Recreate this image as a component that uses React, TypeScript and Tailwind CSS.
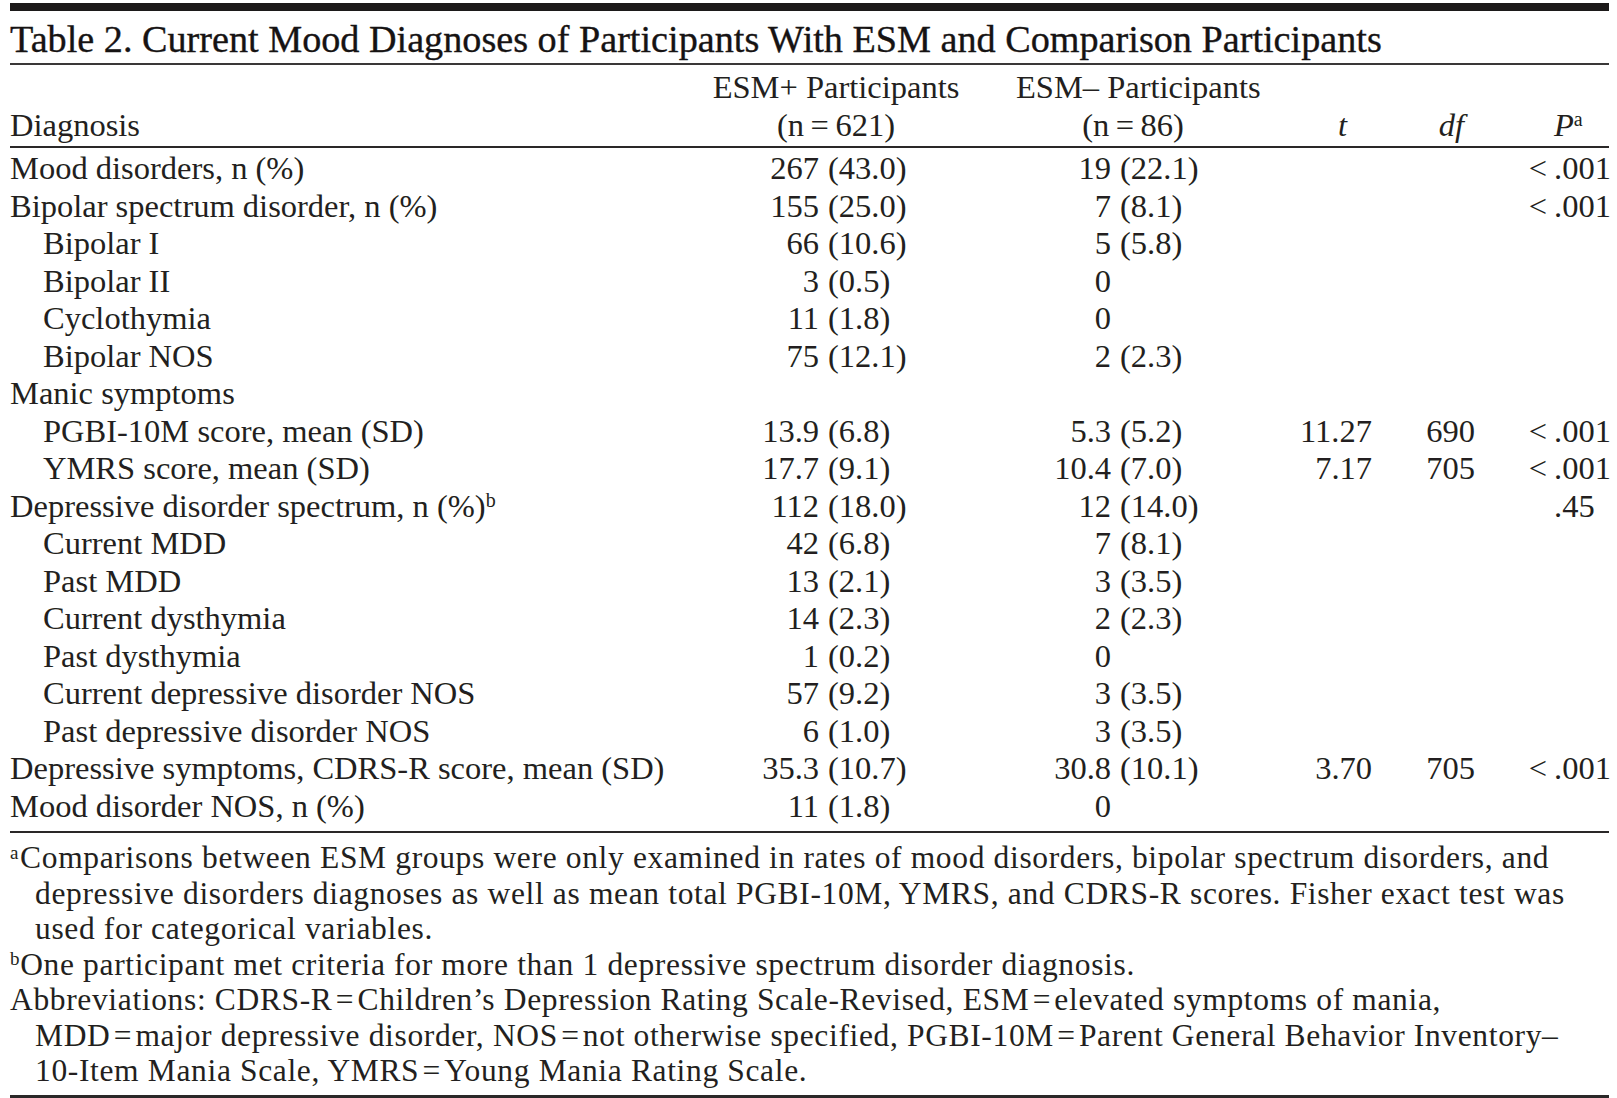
import React from "react";

type Row = {
  label: React.ReactNode;
  indent?: boolean;
  plus?: [string, string];
  minus?: [string, string];
  t?: string;
  df?: string;
  p?: [string, string];
};

const lt: [string, string] = ["<", ".001"];

const rows: Row[] = [
  { label: "Mood disorders, n (%)", plus: ["267", "(43.0)"], minus: ["19", "(22.1)"], p: lt },
  { label: "Bipolar spectrum disorder, n (%)", plus: ["155", "(25.0)"], minus: ["7", "(8.1)"], p: lt },
  { label: "Bipolar I", indent: true, plus: ["66", "(10.6)"], minus: ["5", "(5.8)"] },
  { label: "Bipolar II", indent: true, plus: ["3", "(0.5)"], minus: ["0", ""] },
  { label: "Cyclothymia", indent: true, plus: ["11", "(1.8)"], minus: ["0", ""] },
  { label: "Bipolar NOS", indent: true, plus: ["75", "(12.1)"], minus: ["2", "(2.3)"] },
  { label: "Manic symptoms" },
  { label: "PGBI-10M score, mean (SD)", indent: true, plus: ["13.9", "(6.8)"], minus: ["5.3", "(5.2)"], t: "11.27", df: "690", p: lt },
  { label: "YMRS score, mean (SD)", indent: true, plus: ["17.7", "(9.1)"], minus: ["10.4", "(7.0)"], t: "7.17", df: "705", p: lt },
  {
    label: (
      <>
        Depressive disorder spectrum, n (%)<sup className="text-[20px]">b</sup>
      </>
    ),
    plus: ["112", "(18.0)"],
    minus: ["12", "(14.0)"],
    p: ["", ".45"],
  },
  { label: "Current MDD", indent: true, plus: ["42", "(6.8)"], minus: ["7", "(8.1)"] },
  { label: "Past MDD", indent: true, plus: ["13", "(2.1)"], minus: ["3", "(3.5)"] },
  { label: "Current dysthymia", indent: true, plus: ["14", "(2.3)"], minus: ["2", "(2.3)"] },
  { label: "Past dysthymia", indent: true, plus: ["1", "(0.2)"], minus: ["0", ""] },
  { label: "Current depressive disorder NOS", indent: true, plus: ["57", "(9.2)"], minus: ["3", "(3.5)"] },
  { label: "Past depressive disorder NOS", indent: true, plus: ["6", "(1.0)"], minus: ["3", "(3.5)"] },
  { label: "Depressive symptoms, CDRS-R score, mean (SD)", plus: ["35.3", "(10.7)"], minus: ["30.8", "(10.1)"], t: "3.70", df: "705", p: lt },
  { label: "Mood disorder NOS, n (%)", plus: ["11", "(1.8)"], minus: ["0", ""] },
];

const grid =
  "grid grid-cols-[690px_119px_171px_121px_139px_122px_103px_72px_62px] whitespace-nowrap";

function DataRow({ row }: { row: Row }) {
  return (
    <div className={`${grid} h-[37.5px] leading-[37.5px]`}>
      <div className={row.indent ? "pl-[33px]" : ""}>{row.label}</div>
      <div className="text-right">{row.plus?.[0]}</div>
      <div className="pl-[9px]">{row.plus?.[1]}</div>
      <div className="text-right">{row.minus?.[0]}</div>
      <div className="pl-[9px]">{row.minus?.[1]}</div>
      <div className="text-right">{row.t}</div>
      <div className="text-right">{row.df}</div>
      <div className="text-right">{row.p?.[0]}</div>
      <div className="pl-[7px]">{row.p?.[1]}</div>
    </div>
  );
}

const eq = "\u2009=\u2009";
const feq = "\u200a=\u200a";

export default function App() {
  return (
    <div className="min-h-screen bg-white text-[#231f20] font-['Liberation_Serif',serif]">
      <div className="ml-[10px] w-[1599px] pt-[3px]">
        <div className="h-[8px] bg-[#1c1a1a]" />

        <h1 className="mt-[9px] h-[43px] whitespace-nowrap text-[38.2px] leading-[39px] font-normal text-[#161313] [-webkit-text-stroke:0.35px_#161313]">
          Table 2. Current Mood Diagnoses of Participants With ESM and Comparison Participants
        </h1>
        <div className="h-[2px] bg-[#3a3838]" />

        <div className="pt-[4px] text-[32.5px]">
          {/* header */}
          <div className={`${grid} h-[37.5px] leading-[37.5px]`}>
            <div />
            <div className="col-span-2 pr-[18px] text-center">ESM+ Participants</div>
            <div className="col-span-2 pl-[26px] text-center">ESM– Participants</div>
          </div>
          <div className={`${grid} h-[37.5px] leading-[37.5px]`}>
            <div>Diagnosis</div>
            <div className="col-span-2 pr-[18px] text-center">(n{eq}621)</div>
            <div className="col-span-2 pl-[26px] text-center">(n{eq}86)</div>
            <div className="pr-[25px] text-right italic">t</div>
            <div className="pr-[11px] text-right italic">df</div>
            <div />
            <div className="pl-[7px]">
              <span className="italic">P</span>
              <sup className="text-[20px]">a</sup>
            </div>
          </div>
        </div>
        <div className="mt-[2px] h-[2px] bg-[#2a2828]" />

        <div className="pt-[2px] text-[32.5px]">
          {rows.map((r, i) => (
            <DataRow key={i} row={r} />
          ))}
        </div>
        <div className="mt-[6px] h-[2px] bg-[#2a2828]" />

        <div className="pt-[7px] text-[31.5px] leading-[35.5px] tracking-[0.65px] whitespace-nowrap">
          <div>
            <sup className="text-[19px]">a</sup>
            <span className="pl-[1px]">
              Comparisons between ESM groups were only examined in rates of mood disorders, bipolar spectrum disorders, and
            </span>
          </div>
          <div className="pl-[25px]">
            depressive disorders diagnoses as well as mean total PGBI-10M, YMRS, and CDRS-R scores. Fisher exact test was
          </div>
          <div className="pl-[25px]">used for categorical variables.</div>
          <div>
            <sup className="text-[19px]">b</sup>
            One participant met criteria for more than 1 depressive spectrum disorder diagnosis.
          </div>
          <div>
            Abbreviations: CDRS-R{feq}Children’s Depression Rating Scale-Revised, ESM{feq}elevated symptoms of mania,
          </div>
          <div className="pl-[25px]">
            MDD{feq}major depressive disorder, NOS{feq}not otherwise specified, PGBI-10M{feq}Parent General Behavior Inventory–
          </div>
          <div className="pl-[25px]">10-Item Mania Scale, YMRS{feq}Young Mania Rating Scale.</div>
        </div>
        <div className="mt-[6px] h-[3px] bg-[#2a2828]" />
      </div>
    </div>
  );
}
